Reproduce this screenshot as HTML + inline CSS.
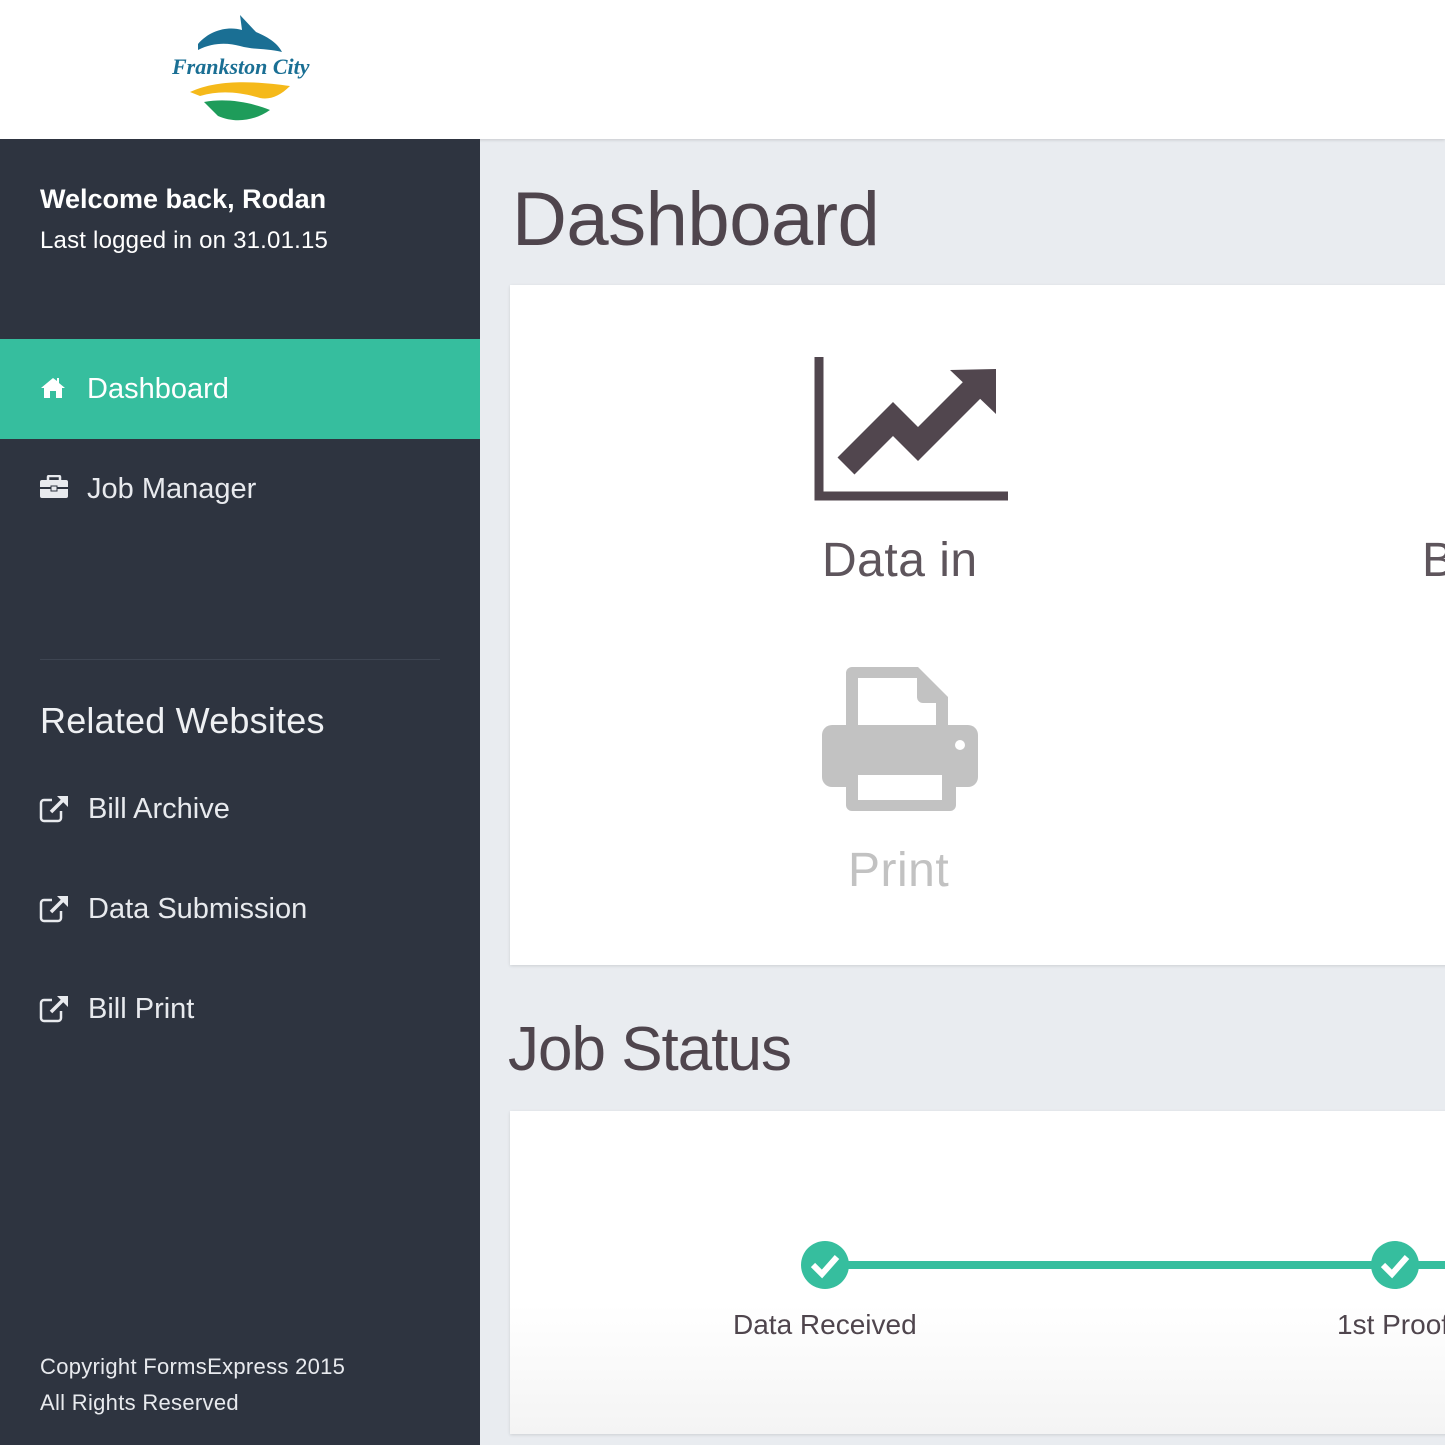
<!DOCTYPE html>
<html><head><meta charset="utf-8"><style>
*{margin:0;padding:0;box-sizing:border-box}
body{width:1445px;height:1445px;overflow:hidden;background:#e9ecf0;font-family:"Liberation Sans",sans-serif;position:relative}
.a{position:absolute;white-space:nowrap}
#top{left:0;top:0;width:1445px;height:139px;background:#fff;box-shadow:0 1px 3px rgba(0,0,0,.15)}
#side{left:0;top:139px;width:480px;height:1306px;background:#2e3440}
.w{color:#fff}
.nav{color:#e8eaee;font-size:29px}
.card{background:#fff;box-shadow:0 1px 3px rgba(0,0,0,.12)}
</style></head><body>
<div class="a" id="top">
<svg class="a" style="left:170px;top:12px" width="142" height="112" viewBox="0 0 142 112">
<path d="M28 32 C40 18 58 14 72 18 L70 3 L86 20 C100 26 108 32 112 40 C96 36 84 38 70 34 C58 31 44 30 28 38 Z" fill="#1a6f94"/>
<text x="2" y="62" font-family="Liberation Serif,serif" font-style="italic" font-weight="bold" font-size="22" fill="#1a6f94">Frankston City</text>
<path d="M20 80 C50 66 90 70 120 74 C110 84 100 88 90 86 C70 80 50 78 30 84 Z" fill="#f5b91a"/>
<path d="M34 90 C56 86 80 90 100 98 C86 108 66 112 48 104 Z" fill="#1e9c5a"/>
</svg>
</div>
<div class="a" id="side">
<div class="a w" style="left:40px;top:45px;font-size:27px;font-weight:bold;letter-spacing:0px">Welcome back, Rodan</div>
<div class="a w" style="left:40px;top:88px;font-size:24px;letter-spacing:0.2px">Last logged in on 31.01.15</div>
<div class="a" style="left:0;top:200px;width:480px;height:100px;background:#36be9e"></div>
<svg class="a" style="left:40px;top:237px" width="26" height="24" viewBox="0 0 26 24"><path d="M13 2 L1 12 L4 12 L4 22 L10 22 L10 15 L16 15 L16 22 L22 22 L22 12 L25 12 L19 7 L19 2 L17 2 L17 5 Z" fill="#fff"/></svg>
<div class="a w" style="left:87px;top:234px;font-size:29px">Dashboard</div>
<svg class="a" style="left:39px;top:336px" width="30" height="24" viewBox="0 0 30 24"><rect x="9" y="1" width="12" height="6" rx="1" fill="none" stroke="#e8eaee" stroke-width="2.5"/><rect x="1" y="5" width="28" height="18" rx="2" fill="#e8eaee"/><rect x="1" y="12" width="28" height="2" fill="#2e3440"/><rect x="12" y="11" width="6" height="5" fill="#e8eaee" stroke="#2e3440" stroke-width="1"/></svg>
<div class="a nav" style="left:87px;top:334px">Job Manager</div>
<div class="a" style="left:40px;top:520px;width:400px;height:1px;background:#3e4552"></div>
<div class="a w" style="left:40px;top:561px;font-size:36px;color:#eef0f3;letter-spacing:0.2px">Related Websites</div>
<div class="a nav" style="left:88px;top:654px">Bill Archive</div>
<div class="a nav" style="left:88px;top:754px">Data Submission</div>
<div class="a nav" style="left:88px;top:854px">Bill Print</div>
<svg class="a" style="left:39px;top:655px" width="30" height="30" viewBox="0 0 30 30"><path d="M13 6 H5 a3 3 0 0 0 -3 3 V24 a3 3 0 0 0 3 3 H19 a3 3 0 0 0 3 -3 V17" fill="none" stroke="#e8eaee" stroke-width="2.5"/><path d="M12 18 L25 5" stroke="#e8eaee" stroke-width="3.5"/><path d="M18 2 H29 V13 Z" fill="#e8eaee"/></svg>
<svg class="a" style="left:39px;top:755px" width="30" height="30" viewBox="0 0 30 30"><path d="M13 6 H5 a3 3 0 0 0 -3 3 V24 a3 3 0 0 0 3 3 H19 a3 3 0 0 0 3 -3 V17" fill="none" stroke="#e8eaee" stroke-width="2.5"/><path d="M12 18 L25 5" stroke="#e8eaee" stroke-width="3.5"/><path d="M18 2 H29 V13 Z" fill="#e8eaee"/></svg>
<svg class="a" style="left:39px;top:855px" width="30" height="30" viewBox="0 0 30 30"><path d="M13 6 H5 a3 3 0 0 0 -3 3 V24 a3 3 0 0 0 3 3 H19 a3 3 0 0 0 3 -3 V17" fill="none" stroke="#e8eaee" stroke-width="2.5"/><path d="M12 18 L25 5" stroke="#e8eaee" stroke-width="3.5"/><path d="M18 2 H29 V13 Z" fill="#e8eaee"/></svg>
<div class="a nav" style="left:40px;top:1215px;font-size:22px;letter-spacing:0.3px">Copyright FormsExpress 2015</div>
<div class="a nav" style="left:40px;top:1251px;font-size:22px;letter-spacing:0.3px">All Rights Reserved</div>
</div>
<div class="a" style="left:512px;top:176px;font-size:76px;color:#4f454d;letter-spacing:-0.5px">Dashboard</div>
<div class="a card" style="left:510px;top:285px;width:940px;height:680px"></div>
<svg class="a" style="left:810px;top:350px" width="210" height="160" viewBox="810 350 210 160">
<path d="M819 357 V496 H1008" fill="none" stroke="#51464e" stroke-width="9"/>
<polyline points="846,466 893,419 918,444 972,390" fill="none" stroke="#51464e" stroke-width="24"/>
<polygon points="950,370 996,369 996,414" fill="#51464e"/>
</svg>
<div class="a" style="left:822px;top:533px;font-size:48px;color:#5e555c;letter-spacing:0.5px">Data in</div>
<div class="a" style="left:1422px;top:533px;font-size:48px;color:#5e555c">B</div>
<svg class="a" style="left:820px;top:665px" width="160" height="150" viewBox="820 665 160 150">
<path d="M852 667 H918 L948 697 V740 H846 V673 a6 6 0 0 1 6 -6Z" fill="#c2c2c2"/>
<path d="M858 678 H917 V697 a6 6 0 0 0 6 6 H936 V733 H858Z" fill="#fff"/>
<rect x="822" y="725" width="156" height="62" rx="10" fill="#c2c2c2"/>
<circle cx="960" cy="745" r="5" fill="#fff"/>
<rect x="846" y="770" width="110" height="41" rx="6" fill="#c2c2c2"/>
<rect x="858" y="775" width="84" height="25" fill="#fff"/>
</svg>
<div class="a" style="left:848px;top:843px;font-size:48px;color:#c2c2c2;letter-spacing:0.5px">Print</div>
<div class="a" style="left:508px;top:1014px;font-size:62px;color:#4f454d;letter-spacing:-1px">Job Status</div>
<div class="a card" style="left:510px;top:1111px;width:940px;height:323px;background:linear-gradient(#fff 60%,#f4f4f4)"></div>
<div class="a" style="left:840px;top:1261px;width:610px;height:8px;background:#36be9e"></div>
<svg class="a" style="left:800px;top:1240px" width="50" height="50"><circle cx="25" cy="25" r="24" fill="#36be9e"/><path d="M13 25 L22 34 L37 17" fill="none" stroke="#fff" stroke-width="6"/></svg>
<svg class="a" style="left:1370px;top:1240px" width="50" height="50"><circle cx="25" cy="25" r="24" fill="#36be9e"/><path d="M13 25 L22 34 L37 17" fill="none" stroke="#fff" stroke-width="6"/></svg>
<div class="a" style="left:733px;top:1309px;font-size:28px;color:#4f454d">Data Received</div>
<div class="a" style="left:1337px;top:1309px;font-size:28px;color:#4f454d">1st Proof</div>
</body></html>
